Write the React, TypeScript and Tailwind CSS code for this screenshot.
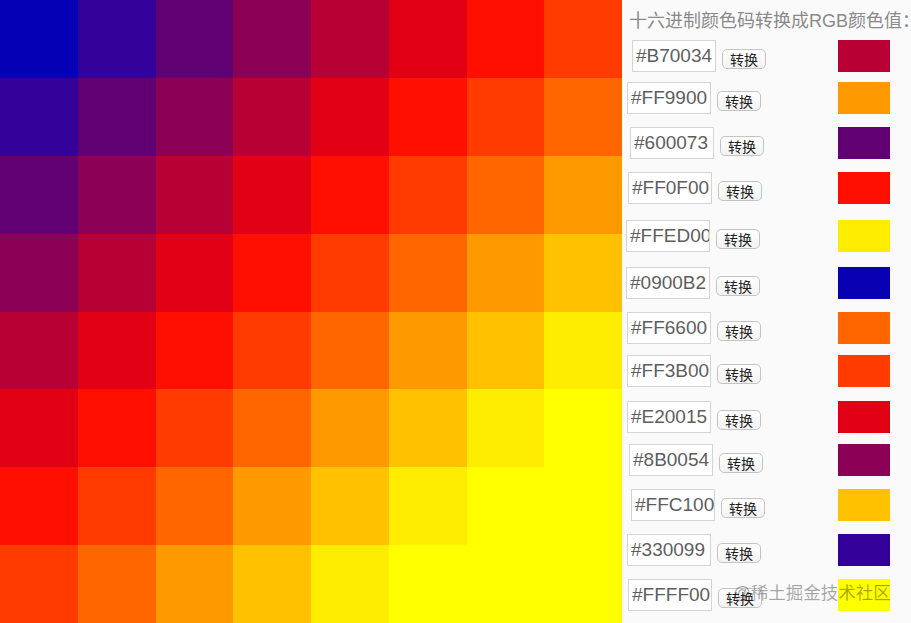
import React from 'react';

// colours along the diagonal (i + j), last ones stay pure yellow
const diagonal = [
  '#0500B6', '#330099', '#600073', '#8B0054', '#B70034', '#E20015', '#FF0F00',
  '#FF3B00', '#FF6600', '#FF9900', '#FFC100', '#FFED00', '#FFFF00', '#FFFF00', '#FFFF00',
];

interface Row {
  hex: string;
  gap: string;
  indent: string;
}

const rows: Row[] = [
  { hex: '#B70034', gap: 'mt-[9px]', indent: 'ml-[10px]' },
  { hex: '#FF9900', gap: 'mt-[10px]', indent: 'ml-[5px]' },
  { hex: '#600073', gap: 'mt-[13px]', indent: 'ml-[8px]' },
  { hex: '#FF0F00', gap: 'mt-[13px]', indent: 'ml-[6px]' },
  { hex: '#FFED00', gap: 'mt-[16px]', indent: 'ml-[4px]' },
  { hex: '#0900B2', gap: 'mt-[15px]', indent: 'ml-[4px]' },
  { hex: '#FF6600', gap: 'mt-[13px]', indent: 'ml-[5px]' },
  { hex: '#FF3B00', gap: 'mt-[11px]', indent: 'ml-[5px]' },
  { hex: '#E20015', gap: 'mt-[14px]', indent: 'ml-[5px]' },
  { hex: '#8B0054', gap: 'mt-[11px]', indent: 'ml-[7px]' },
  { hex: '#FFC100', gap: 'mt-[13px]', indent: 'ml-[9px]' },
  { hex: '#330099', gap: 'mt-[13px]', indent: 'ml-[5px]' },
  { hex: '#FFFF00', gap: 'mt-[13px]', indent: 'ml-[6px]' },
];

const ColorGrid: React.FC = () => {
  const cells = [];
  for (let i = 0; i < 8; i++) {
    for (let j = 0; j < 8; j++) {
      cells.push(<div key={`${i}-${j}`} style={{ backgroundColor: diagonal[i + j] }} />);
    }
  }
  return <div className="grid grid-cols-8 grid-rows-8 w-[622px] h-full shrink-0">{cells}</div>;
};

const ConvertRow: React.FC<{ row: Row }> = ({ row }) => (
  <div className={`flex items-end h-[32px] pr-[21px] ${row.gap}`}>
    <input
      readOnly
      value={row.hex}
      className={`w-[84px] h-full border border-[#d4d4d4] bg-white pl-[3px] text-[19px] text-[#5e5e5e] outline-none font-['Liberation_Sans',Arial,sans-serif] ${row.indent}`}
    />
    <button className="ml-[6px] mb-[3px] w-[44px] h-[20px] rounded-[5px] border border-[#c4c4c4] bg-gradient-to-b from-white to-[#f2f2f2] text-[14px] leading-none text-[#222] font-['Noto_Sans_CJK_SC',sans-serif]">
      转换
    </button>
    <div className="ml-auto w-[52px] h-full" style={{ backgroundColor: row.hex }} />
  </div>
);

export default function App() {
  return (
    <div className="flex w-[911px] h-[623px] overflow-hidden">
      <ColorGrid />
      <div className="relative flex-1 bg-[#fafafa] overflow-hidden">
        <div className="pl-[7px] pt-[11px] text-[18px] leading-[20px] whitespace-nowrap text-[#8a8a8a] font-['Liberation_Sans','Noto_Sans_CJK_SC',sans-serif]">
          十六进制颜色码转换成RGB颜色值：
        </div>
        {rows.map((row) => (
          <ConvertRow key={row.hex} row={row} />
        ))}
        <div className="absolute left-[111px] top-[582px] text-[17.5px] leading-[22px] whitespace-nowrap text-black/35 font-['Liberation_Sans','Noto_Sans_CJK_SC',sans-serif]">
          @稀土掘金技术社区
        </div>
      </div>
    </div>
  );
}
